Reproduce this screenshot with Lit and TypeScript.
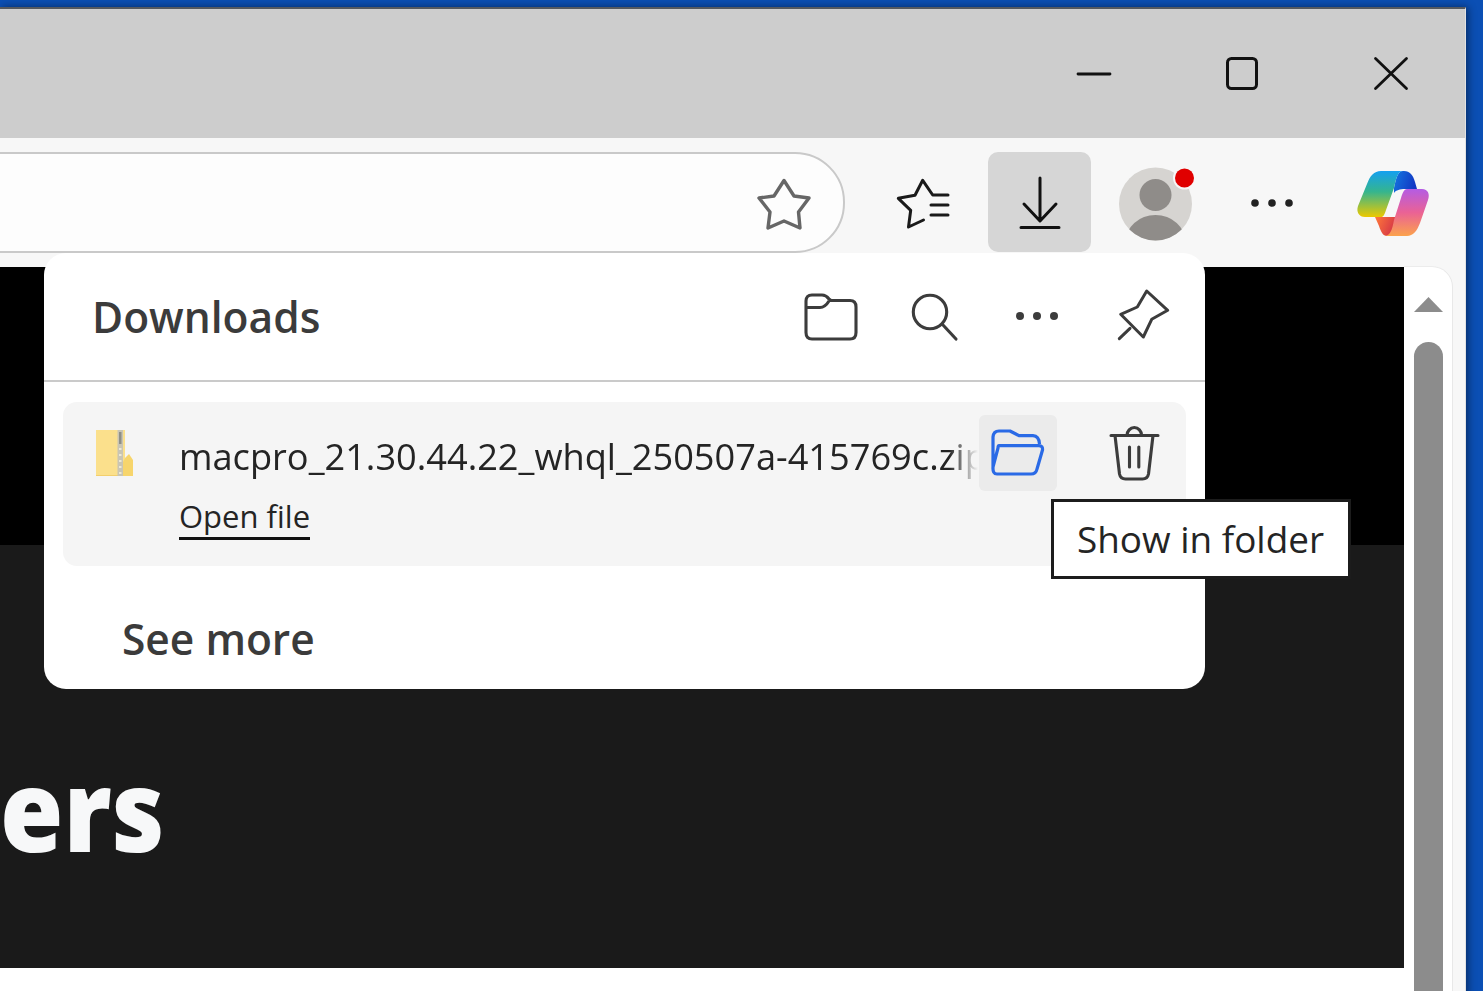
import { LitElement, html, css, svg } from "lit";
import { customElement } from "lit/decorators.js";

@customElement("app-root")
export class AppRoot extends LitElement {
  static styles = css`
    :host {
      display: block;
      width: 1483px;
      height: 991px;
      overflow: hidden;
      background: #0b4fb4;
      font-family: "Open Sans", "Noto Sans", sans-serif;
    }
    svg { display: block; overflow: visible; }
    .window {
      box-sizing: border-box;
      width: 1466px;
      height: 991px;
      margin-top: 7px;
      border-top: 2px solid #55595f;
      display: flex;
      flex-direction: column;
      background: #f7f7f7;
      box-shadow: 2px 0 8px rgba(0, 0, 0, 0.45);
      border-right: 1px solid #e2e2e2;
    }
    .titlebar {
      height: 129px;
      flex: none;
      background: #cdcdcd;
      display: flex;
      justify-content: flex-end;
    }
    .ctl {
      width: 149px;
      display: flex;
      align-items: center;
      justify-content: center;
    }
    .ctl.min { padding-left: 2px; box-sizing: border-box; }
    .toolbar {
      height: 129px;
      flex: none;
      display: flex;
      align-items: center;
      padding-right: 19px;
    }
    .address {
      box-sizing: border-box;
      width: 945px;
      height: 101px;
      margin-left: -100px;
      margin-right: 27px;
      background: #fdfdfd;
      border: 2px solid #c9c9c9;
      border-radius: 50px;
      display: flex;
      align-items: center;
      justify-content: flex-end;
      padding-right: 32px;
    }
    .tools { display: flex; gap: 13px; align-items: center; }
    .tool {
      width: 103px;
      height: 100px;
      display: flex;
      align-items: center;
      justify-content: center;
      border-radius: 10px;
    }
    .tool.active {
      box-sizing: border-box;
      background: #d6d6d6;
      margin-bottom: 2px;
      padding-top: 2px;
    }
    .tool.fav { padding-right: 6px; box-sizing: border-box; }
    .tool.avatar { padding-left: 4px; box-sizing: border-box; }
    .tool.last { margin-left: 6px; width: 103px; box-sizing: border-box; padding-top: 2px; }
    .main {
      flex: 1;
      display: flex;
      position: relative;
      min-height: 0;
    }
    .page { width: 1404px; display: flex; flex-direction: column; background: #fff; }
    .hero-black { height: 278px; background: #000; }
    .hero-dark {
      height: 423px;
      background: #1a1a1a;
      overflow: hidden;
      padding-top: 206px;
      box-sizing: border-box;
    }
    .hero-title {
      margin: 0;
      color: #f7f8f9;
      font-family: "Open Sans", sans-serif;
      font-weight: 800;
      font-size: 114px;
      line-height: 114px;
      transform: scaleX(0.9);
      transform-origin: left top;
    }
    .scroll {
      width: 48px;
      background: #fff;
      border-top-right-radius: 20px;
      box-shadow: 1px 0 0 #e8e8e8, 0 -1px 0 #ececec;
      display: flex;
      flex-direction: column;
      align-items: center;
    }
    .arrow { margin-top: 30px; }
    .thumb {
      width: 29px;
      flex: 1;
      margin-top: 30px;
      background: #8c8c8c;
      border-radius: 15px 15px 0 0;
    }
    .flyout {
      position: absolute;
      left: 44px;
      top: -14px;
      width: 1161px;
      height: 436px;
      background: #fff;
      border-radius: 22px;
    }
    .fly-head {
      box-sizing: border-box;
      height: 129px;
      border-bottom: 2px solid #cacaca;
      display: flex;
      align-items: center;
      padding: 0 10px 0 48px;
    }
    .fly-title {
      flex: 1;
      font-size: 42.5px;
      font-weight: 600;
      color: #3b3b3b;
    }
    .fly-btn {
      width: 104px;
      height: 80px;
      display: flex;
      align-items: center;
      justify-content: center;
    }
    .fly-btn.dots { margin: -2px 0 0 -2px; }
    .fly-btn.pin { margin: -4px 0 0 2px; }
    .item {
      box-sizing: border-box;
      height: 164px;
      margin: 20px 19px 0;
      padding: 13px 13px 0 33px;
      background: #f5f5f5;
      border-radius: 14px;
      display: flex;
      align-items: flex-start;
    }
    .zip { margin-top: 15px; margin-right: 46px; flex: none; }
    .info { width: 800px; flex: none; }
    .name {
      font-size: 36.2px;
      line-height: 54px;
      margin-top: 14px;
      color: #242424;
      white-space: nowrap;
      overflow: hidden;
      -webkit-mask-image: linear-gradient(to right, #000 770px, transparent 799px);
      mask-image: linear-gradient(to right, #000 770px, transparent 799px);
    }
    .open {
      display: inline-block;
      margin-top: 12px;
      font-size: 31px;
      line-height: 42px;
      color: #242424;
      border-bottom: 3px solid #111;
    }
    .act {
      width: 78px;
      height: 76px;
      display: flex;
      align-items: center;
      justify-content: center;
      border-radius: 6px;
      flex: none;
    }
    .act.hover { background: #ebebeb; }
    .act.trash { margin-left: 38px; }
    .more {
      margin: 48px 0 0 78px;
      font-size: 42.5px;
      line-height: 50px;
      font-weight: 600;
      color: #3b3b3b;
    }
    .tooltip {
      position: absolute;
      left: 1007px;
      top: 246px;
      box-sizing: border-box;
      width: 300px;
      height: 80px;
      border: 3px solid #1c1c1c;
      background: #fff;
      padding-left: 23px;
      display: flex;
      align-items: center;
      font-size: 36.9px;
      color: #242424;
      white-space: nowrap;
    }
  `;

  private copilot() {
    return html`<svg width="74" height="68" viewBox="0 0 74 68">
      <defs>
        <linearGradient id="cpL" x1="0" y1="0" x2="0" y2="1">
          <stop offset="0" stop-color="#14a0f0" />
          <stop offset="0.45" stop-color="#35b58e" />
          <stop offset="1" stop-color="#ecc900" />
        </linearGradient>
        <linearGradient id="cpT" x1="0" y1="0" x2="1" y2="0.3">
          <stop offset="0" stop-color="#1478e0" />
          <stop offset="1" stop-color="#1238c4" />
        </linearGradient>
        <linearGradient id="cpR" x1="0.5" y1="0" x2="0.5" y2="1">
          <stop offset="0" stop-color="#b45ce4" />
          <stop offset="0.5" stop-color="#ea6295" />
          <stop offset="1" stop-color="#fba24c" />
        </linearGradient>
        <linearGradient id="cpB" x1="0" y1="0" x2="1" y2="0.4">
          <stop offset="0" stop-color="#ff7a3a" />
          <stop offset="1" stop-color="#d83a46" />
        </linearGradient>
      </defs>
      <path fill="url(#cpT)" d="M43 1H47C53 1 56 5 58 12L60 19H48C43 19 39 20 37 23L37 18C39 8 41 1 46 1Z" />
      <path fill="url(#cpB)" d="M18 47H38V66H30C26 66 24 62 22 56Z" />
      <path fill="url(#cpR)" d="M50 19H65C71 19 73 24 71 30L63 53C60 61 56 66 50 66H28C33 65 35 61 37 50L44 28C45 24 47 19 50 19Z" />
      <path fill="url(#cpL)" d="M24 1H46C41 1 39 8 37 18L29 40C28 43 27 46 25 47H8C2 47-1 42 1 36L10 14C13 6 17 1 24 1Z" />
    </svg>`;
  }

  private zip() {
    return html`<svg width="37" height="46" viewBox="0 0 37 46">
      <path fill="#fbe08c" d="M0 0H29V46H0Z" />
      <path fill="#f3cf6c" d="M0 45H37V46H0Z" />
      <path fill="#f7d56c" d="M29 28L33 24L37 30V46H27V32Z" />
      <path fill="#c9c5b4" d="M21.500 0H27V46H21.500Z" />
      <path fill="#8f8f86" d="M23 2H25.500V14H23Z" />
      ${[18, 24, 30, 36, 42].map((y) => svg`<path fill="#ece8d5" d="M23 ${y}H25.500V${y + 2}H23Z" />`)}
    </svg>`;
  }

  render() {
    return html`
      <div class="window">
        <div class="titlebar">
          <div class="ctl min">
            <svg width="34" height="4" viewBox="0 0 34 4"><path d="M1 2H33" stroke="#111" stroke-width="2.800" stroke-linecap="round" /></svg>
          </div>
          <div class="ctl">
            <svg width="32" height="33" viewBox="0 0 32 33"><rect x="1.500" y="1.500" width="29" height="30" rx="4" fill="none" stroke="#111" stroke-width="3" /></svg>
          </div>
          <div class="ctl">
            <svg width="34" height="33" viewBox="0 0 34 33"><path d="M1.500 1.500L32.500 31.500M32.500 1.500L1.500 31.500" stroke="#111" stroke-width="2.800" stroke-linecap="round" /></svg>
          </div>
        </div>

        <div class="toolbar">
          <div class="address">
            <svg width="56" height="54" viewBox="0 0 56 54">
              <path d="M29 4.500L39 20L54 22L43.500 36L45 52L29 45L13 52L15 36L4 22L19 20Z" fill="none" stroke="#666" stroke-width="3.400" stroke-linejoin="round" />
            </svg>
          </div>
          <div class="tools">
            <div class="tool fav">
              <svg width="56" height="54" viewBox="0 0 56 54">
                <path d="M30.500 44L15.500 51L17.700 34.300L5.300 22.300L22 19.300L29.700 4.300L39.700 19H55M38 29H55M38 39H55" fill="none" stroke="#1a1a1a" stroke-width="3" stroke-linejoin="round" stroke-linecap="round" />
              </svg>
            </div>
            <div class="tool active">
              <svg width="40" height="54" viewBox="0 0 40 54">
                <path d="M20 2V44M4 28L20 45L36 28M1 51.500H39" fill="none" stroke="#111" stroke-width="3" stroke-linecap="round" stroke-linejoin="round" />
              </svg>
            </div>
            <div class="tool avatar">
              <svg width="78" height="78" viewBox="0 0 78 78">
                <defs><clipPath id="av"><circle cx="36.500" cy="40" r="36.500" /></clipPath></defs>
                <circle cx="36.500" cy="40" r="36.500" fill="#d6d4d1" />
                <g clip-path="url(#av)">
                  <circle cx="36.500" cy="31" r="16" fill="#8f8c89" />
                  <ellipse cx="36.500" cy="78" rx="30" ry="27" fill="#8f8c89" />
                </g>
                <circle cx="65.500" cy="14" r="11.500" fill="#f7f7f7" />
                <circle cx="65.500" cy="14" r="9.500" fill="#e00000" />
              </svg>
            </div>
            <div class="tool">
              <svg width="44" height="10" viewBox="0 0 44 10"><circle cx="5" cy="5" r="3.800" fill="#222" /><circle cx="22" cy="5" r="3.800" fill="#222" /><circle cx="39" cy="5" r="3.800" fill="#222" /></svg>
            </div>
            <div class="tool last">${this.copilot()}</div>
          </div>
        </div>

        <div class="main">
          <div class="page">
            <div class="hero-black"></div>
            <div class="hero-dark"><h1 class="hero-title">ers</h1></div>
          </div>
          <div class="scroll">
            <svg class="arrow" width="29" height="15" viewBox="0 0 29 15"><path d="M14.500 0L29 15H0Z" fill="#8c8c8c" /></svg>
            <div class="thumb"></div>
          </div>

          <div class="flyout">
            <div class="fly-head">
              <div class="fly-title">Downloads</div>
              <div class="fly-btn">
                <svg width="54" height="46" viewBox="0 0 54 46">
                  <path d="M2 15V7Q2 1 8 1H18Q22 1 25 5L27 6.500H46Q52 6.500 52 13V38.500Q52 45 46 45H8Q2 45 2 38.500V15M2 13.500H16Q21 13.500 25 7" fill="none" stroke="#3c3c3c" stroke-width="3.100" stroke-linejoin="round" />
                </svg>
              </div>
              <div class="fly-btn">
                <svg width="48" height="48" viewBox="0 0 48 48">
                  <circle cx="19" cy="19" r="16.700" fill="none" stroke="#3c3c3c" stroke-width="3.100" />
                  <path d="M32 32L45 46" stroke="#3c3c3c" stroke-width="3.100" stroke-linecap="round" />
                </svg>
              </div>
              <div class="fly-btn dots">
                <svg width="44" height="10" viewBox="0 0 44 10"><circle cx="5" cy="5" r="4" fill="#3c3c3c" /><circle cx="22" cy="5" r="4" fill="#3c3c3c" /><circle cx="39" cy="5" r="4" fill="#3c3c3c" /></svg>
              </div>
              <div class="fly-btn pin">
                <svg width="52" height="52" viewBox="0 0 52 52">
                  <path d="M29.700 2L50.700 21.300L34.700 30.300L26.300 48L3.700 25.300L20.300 18ZM13 39.300L2.300 49.700" fill="none" stroke="#3c3c3c" stroke-width="3" stroke-linejoin="round" stroke-linecap="round" />
                </svg>
              </div>
            </div>

            <div class="item">
              <div class="zip">${this.zip()}</div>
              <div class="info">
                <div class="name">macpro_21.30.44.22_whql_250507a-415769c.zip</div>
                <div class="open">Open file</div>
              </div>
              <div class="act hover">
                <svg width="54" height="46" viewBox="0 0 54 46">
                  <path d="M2 39V7Q2.500 1 8 1H19L28 5.700H42Q48 6 48.500 14M8 15.700H48Q52 15.700 51.500 20L46 39Q45 44 40 44H6Q1.500 44 2 37L7 18Q7 15.700 8 15.700Z" fill="none" stroke="#2a6ae6" stroke-width="3.200" stroke-linejoin="round" />
                </svg>
              </div>
              <div class="act trash">
                <svg width="50" height="54" viewBox="0 0 50 54">
                  <path d="M2 9.500H49M18 9.500A7.300 8 0 0 1 32.600 9.500M6 9.500L10.500 48Q11.500 53 16.500 53H33.500Q38.500 53 39.500 48L44 9.500M20.500 21V41M29.800 21V41" fill="none" stroke="#3c3c3c" stroke-width="3.100" stroke-linecap="round" stroke-linejoin="round" />
                </svg>
              </div>
            </div>

            <div class="more">See more</div>
            <div class="tooltip">Show in folder</div>
          </div>
        </div>
      </div>
    `;
  }
}
